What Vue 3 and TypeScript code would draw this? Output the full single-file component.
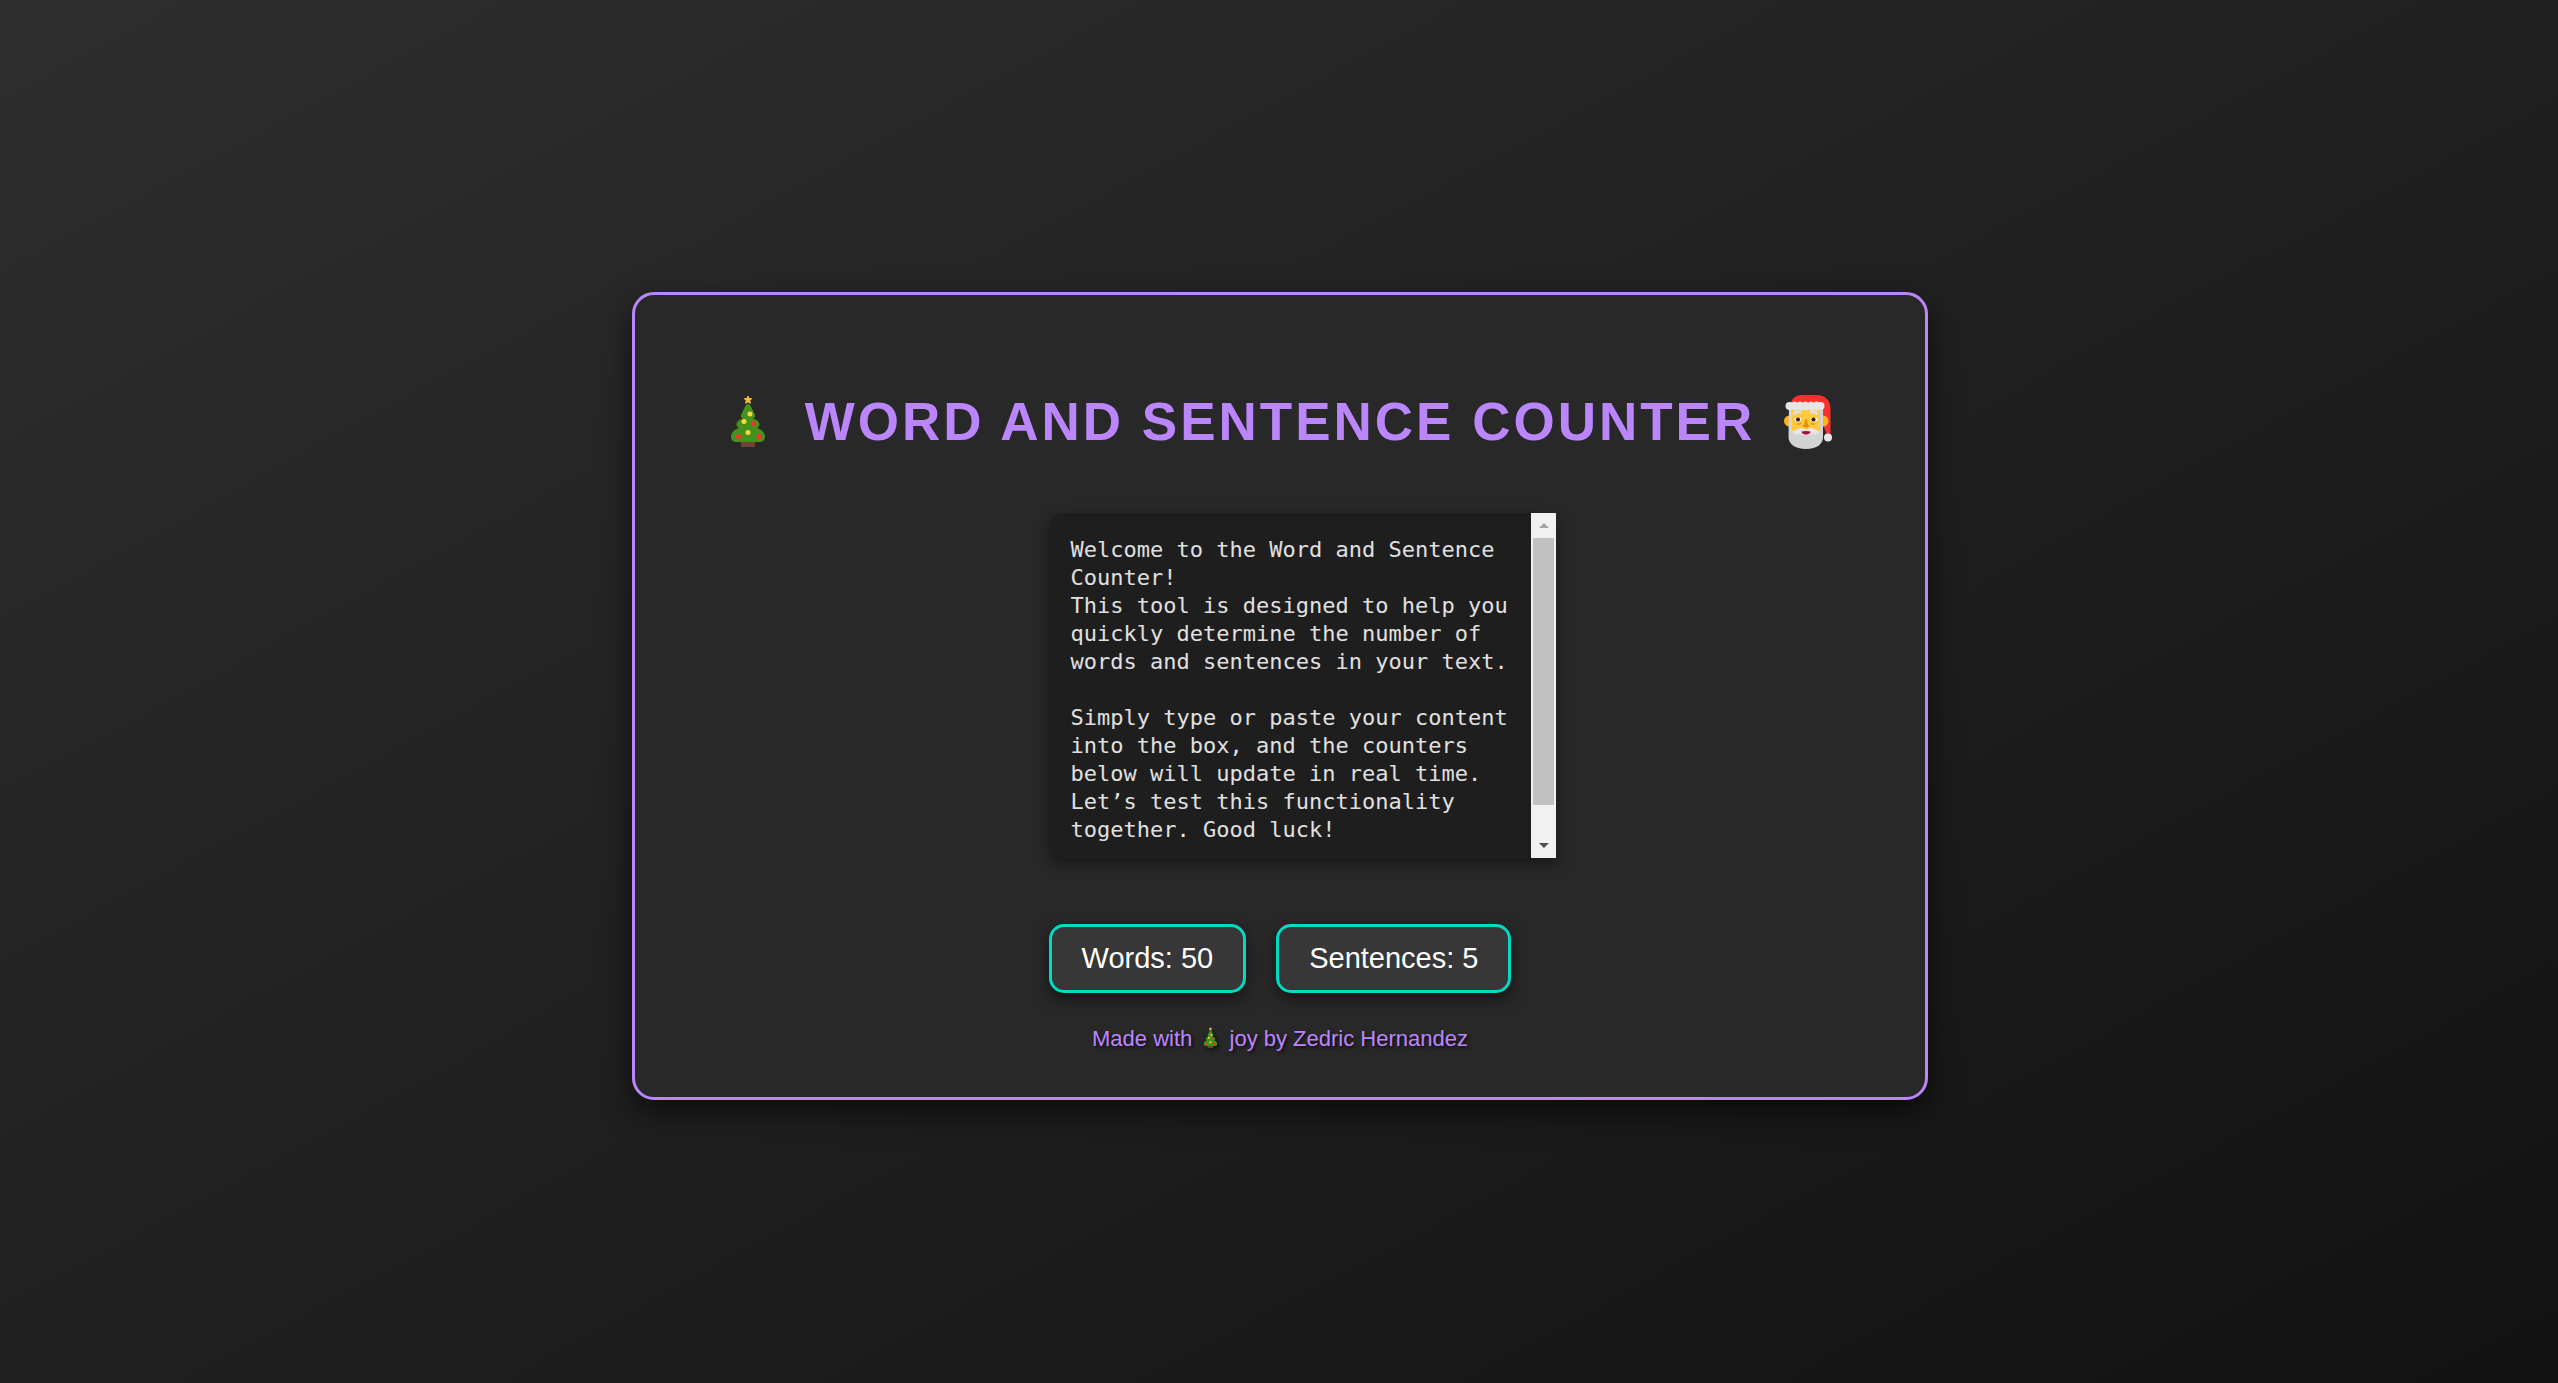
<script setup lang="ts">
import { computed, ref } from 'vue'

const text = ref<string>(
  'Welcome to the Word and Sentence Counter!\n' +
    'This tool is designed to help you quickly determine the number of words and sentences in your text.\n\n' +
    'Simply type or paste your content into the box, and the counters below will update in real time. ' +
    'Let’s test this functionality together. Good luck!',
)

const words = computed<number>(() => text.value.split(/\s+/).filter(Boolean).length)
const sentences = computed<number>(() => (text.value.match(/[^.!?]+[.!?]+/g) ?? []).length)
</script>

<template>
  <svg class="symbols" aria-hidden="true">
    <symbol id="tree" viewBox="0 0 34 54">
      <path fill="#6d4534" d="M10 46h14v5q0 1-1 1H11q-1 0-1-1z" />
      <path
        fill="#44911b"
        d="M17 9c1.300 0 2 .8 2.600 2l4 8c1.400 2.500.4 4-1.600 4.500 4 1 6.500 3.500 6.500 6 0 1.800-1 3-2.500 3.500 5 1.500 8 5 8 8.500 0 3-2 5.500-5 5.500H5c-3 0-5-2.500-5-5.500 0-3.500 3-7 8-8.500-1.500-.5-2.500-1.700-2.500-3.500 0-2.500 2.500-5 6.500-6-2-.5-3-2-1.600-4.500l4-8C15 9.800 15.700 9 17 9z"
      />
      <path fill="#fcc03d" stroke="#fcc03d" stroke-linejoin="round" d="M17 1l1 2.500 2.700.2-2 1.800.7 2.800L17 6.800l-2.400 1.500.7-2.800-2-1.800 2.700-.2z" />
      <g fill="#fcd53f">
        <circle cx="19" cy="19" r="2.500" />
        <circle cx="13" cy="26.500" r="2.500" />
        <circle cx="17" cy="37.500" r="2.500" />
      </g>
      <g fill="#f8312f">
        <circle cx="22.500" cy="28.500" r="2.600" />
        <circle cx="7.500" cy="41.500" r="2.600" />
        <circle cx="28" cy="41.500" r="2.600" />
      </g>
    </symbol>
  </svg>

  <main class="page">
    <section class="card">
      <h1 class="title">
        <svg class="emoji" viewBox="-19 0 72 54" role="img" aria-label="Christmas tree"><use href="#tree" width="34" height="54" /></svg>
        WORD AND SENTENCE COUNTER
        <svg class="emoji" viewBox="1 0 72 54" role="img" aria-label="Santa Claus">
          <path fill="#f8312f" d="M19 8C20 3 24 0 30 0h14c9 0 14.500 5 14.500 14v25h-4L50 27V12z" />
          <circle cx="17.500" cy="26" r="5.500" fill="#ffb31a" />
          <circle cx="51" cy="26" r="5.500" fill="#ffb31a" />
          <path fill="#d3d3d3" d="M17 11h34v31c0 7-6 12-17 12s-17.500-5-17.500-12z" />
          <path fill="#ffc83d" d="M20 13h28v21c0 3-4 4-14 4s-14-1-14-4z" />
          <g fill="none" stroke="#e1e1e1" stroke-width="3" stroke-linecap="round">
            <path d="M22.500 18.500q2-2.200 5.500-1.500M45 18.500q-2-2.200-5.500-1.500" />
          </g>
          <ellipse cx="25.700" cy="24.500" rx="3.600" ry="1.900" fill="#fff" />
          <ellipse cx="42" cy="24.500" rx="3.600" ry="1.900" fill="#fff" />
          <circle cx="26" cy="24.500" r="2.100" fill="#3b1d24" />
          <circle cx="41.500" cy="24.500" r="2.100" fill="#3b1d24" />
          <path fill="#e8900c" d="M34 24c1 0 1.200 1 1.500 3.500.3 2 1.500 2.500 1.500 3.500 0 2-6 2-6 0 0-1 1.200-1.500 1.500-3.500C32.800 25 33 24 34 24z" />
          <path fill="none" stroke="#e8900c" stroke-width="1.200" stroke-linecap="round" d="M25.500 29q2 .7 3.500-.8M42.500 29q-2 .7-3.500-.8" />
          <path fill="#e6e6e6" d="M21 36.500c0-1 1.500-.5 3-1.500 2-1.500 3.500-2 5.500-2 2.500 0 3 1.500 4.500 1.500s2-1.500 4.500-1.500c2 0 3.500.5 5.500 2 1.500 1 3 .5 3 1.500 0 2-2 3-4.500 3H25.500c-2.500 0-4.500-1-4.500-3z" />
          <path fill="#a50f3c" d="M29.500 36.500q4.500-1 9 0c0 4-9 4-9 0z" />
          <g fill="#e6e6e6">
            <rect x="16" y="7.500" width="34" height="7" rx="2" />
            <circle cx="17.500" cy="11" r="4" />
            <circle cx="22.500" cy="9" r="2.500" /><circle cx="28" cy="9" r="2.500" /><circle cx="33.500" cy="9" r="2.500" />
            <circle cx="39" cy="9" r="2.500" /><circle cx="44.500" cy="9" r="2.500" />
            <circle cx="23" cy="13" r="2.500" /><circle cx="28.500" cy="13" r="2.500" /><circle cx="34" cy="13" r="2.500" />
            <circle cx="39.500" cy="13" r="2.500" /><circle cx="45" cy="13" r="2.500" />
            <circle cx="48.500" cy="11" r="4" />
            <circle cx="56" cy="42.500" r="4" />
          </g>
        </svg>
      </h1>

      <div class="tool">
        <div class="editor">
          <textarea v-model="text" class="input" aria-label="Your text" spellcheck="false"></textarea>
          <div class="scrollbar" aria-hidden="true">
            <span class="arrow up"></span>
            <span class="thumb"></span>
            <span class="arrow down"></span>
          </div>
        </div>
        <div class="counters">
          <div class="counter">Words: {{ words }}</div>
          <div class="counter">Sentences: {{ sentences }}</div>
        </div>
      </div>

      <footer class="credit">
        Made with
        <svg class="mini" viewBox="-14 0 62 54" role="img" aria-label="Christmas tree"><use href="#tree" width="34" height="54" /></svg>
        joy by Zedric Hernandez
      </footer>
    </section>
  </main>
</template>

<style>
body {
  margin: 0;
  background: #121212;
}
</style>

<style scoped>
.symbols {
  position: absolute;
  width: 0;
  height: 0;
}

.page {
  box-sizing: border-box;
  min-height: 100vh;
  padding: 9px 0 0 2px;
  display: flex;
  align-items: center;
  justify-content: center;
  background: linear-gradient(to bottom right, #2e2e2e, #121212);
  font-family: Arial, 'Liberation Sans', sans-serif;
}

.card {
  box-sizing: border-box;
  width: 100%;
  max-width: 1296px;
  padding: 45px 45px 42px;
  border: 3px solid #bb86fc;
  border-radius: 22px;
  background: #282828;
  box-shadow: 0 12px 30px rgba(0, 0, 0, 0.6);
  display: flex;
  flex-direction: column;
  align-items: center;
}

.title {
  margin: 52px 0 61px;
  font-size: 53px;
  line-height: 60px;
  letter-spacing: 3px;
  color: #bb86fc;
  white-space: nowrap;
}

.emoji {
  width: 72px;
  height: 54px;
  margin-right: 3px;
  vertical-align: -9px;
}

.tool {
  display: flex;
  flex-direction: column;
  gap: 66px;
}

.editor {
  display: flex;
  height: 345px;
  margin-right: -45px;
  border-radius: 15px 0 0 15px;
  background: #1e1e1e;
  box-shadow: 0 6px 15px rgba(0, 0, 0, 0.4);
}

.input {
  box-sizing: border-box;
  flex: 1;
  min-width: 0;
  padding: 23px 16px 0 22px;
  border: 0;
  outline: 0;
  resize: none;
  overflow: hidden;
  background: transparent;
  color: #e0e0e0;
  font-family: 'DejaVu Sans Mono', 'Liberation Mono', monospace;
  font-size: 22px;
  line-height: 28px;
}

.scrollbar {
  width: 25px;
  display: flex;
  flex-direction: column;
  align-items: center;
  background: #f1f1f1;
}

.arrow {
  width: 10px;
  height: 5px;
  margin: 10px 0;
}

.up {
  background: #a3a3a3;
  clip-path: polygon(50% 0, 100% 100%, 0 100%);
}

.down {
  margin-top: auto;
  background: #505050;
  clip-path: polygon(0 0, 100% 0, 50% 100%);
}

.thumb {
  width: 21px;
  height: 267px;
  background: #c1c1c1;
}

.counters {
  display: flex;
  gap: 30px;
}

.counter {
  padding: 15px 30px;
  border: 3px solid #03dac5;
  border-radius: 15px;
  background: #373737;
  box-shadow: 0 6px 15px rgba(0, 0, 0, 0.5);
  color: #fff;
  font-size: 29px;
  line-height: 33px;
}

.credit {
  margin-top: 30px;
  font-size: 22px;
  line-height: 32px;
  color: #bb86fc;
  text-shadow: 2px 2px 3px rgba(0, 0, 0, 0.6);
}

.mini {
  width: 25px;
  height: 22px;
  vertical-align: -3px;
  filter: drop-shadow(2px 2px 2px rgba(0, 0, 0, 0.6));
}
</style>
